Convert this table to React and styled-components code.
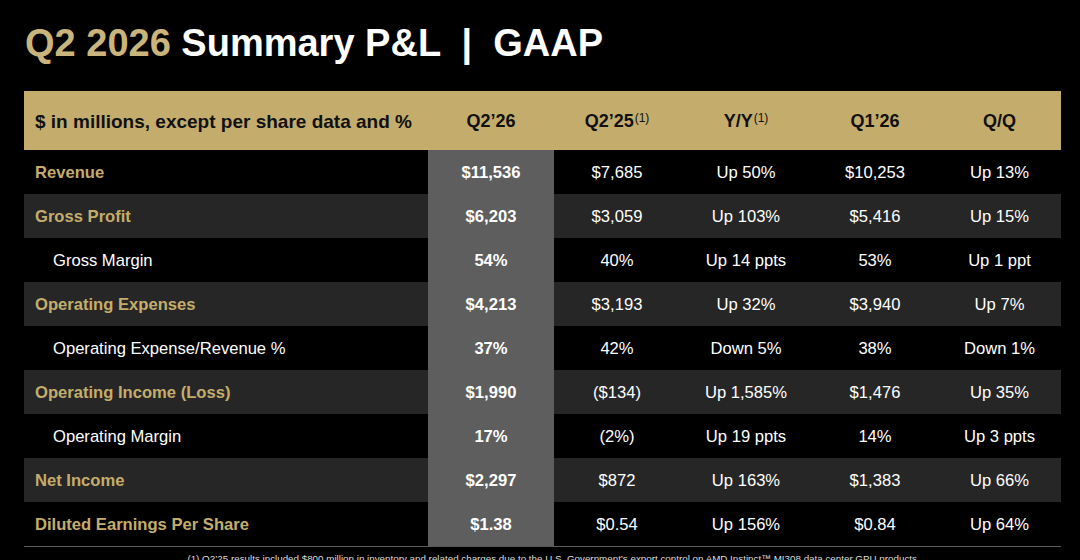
import React from 'react';
import styled, { createGlobalStyle } from 'styled-components';

const GOLD = '#c4ad6c';

const Global = createGlobalStyle`
  html, body { margin: 0; padding: 0; background: #000; }
  body { font-family: "Liberation Sans", Arial, sans-serif; }
`;

const Slide = styled.div`
  width: 1080px;
  height: 560px;
  overflow: hidden;
  background: #000;
  padding: 21px 19px 0 24px;
  box-sizing: border-box;
`;

const Title = styled.h1`
  margin: 0 0 0 1px;
  height: 70px;
  font-size: 38px;
  line-height: 44px;
  font-weight: 700;
  color: #fff;
  white-space: pre;
`;

const Gold = styled.span`
  color: #c9b57c;
`;

const Table = styled.div`
  display: grid;
  grid-template-columns: 404px 126px 126px 132px 126px 123px;
  border-bottom: 1px solid #5a5a5a;
`;

const HeadCell = styled.div`
  height: 59px;
  background: ${GOLD};
  color: #111;
  font-size: ${(p) => (p.$left ? '19px' : '18px')};
  font-weight: 700;
  display: flex;
  align-items: center;
  justify-content: ${(p) => (p.$left ? 'flex-start' : 'center')};
  padding-left: ${(p) => (p.$left ? '11px' : '0')};
  padding-top: 2px;
  box-sizing: border-box;
`;

const Sup = styled.span`
  font-size: 12px;
  font-weight: 400;
  line-height: 1;
  align-self: flex-start;
  margin-top: 19px;
  margin-left: 1px;
`;

const Cell = styled.div`
  height: 44px;
  display: flex;
  align-items: center;
  justify-content: ${(p) => (p.$label ? 'flex-start' : 'center')};
  padding-left: ${(p) => (p.$label ? (p.$sub ? '29px' : '11px') : '0')};
  padding-top: 1px;
  box-sizing: border-box;
  font-size: 16.6px;
  font-weight: ${(p) => (p.$bold ? 700 : 400)};
  color: ${(p) => (p.$label && !p.$sub ? GOLD : '#fff')};
  background: ${(p) => (p.$focus ? '#5e5e5e' : p.$shade ? '#262626' : '#000')};
  white-space: nowrap;
`;

const Footnote = styled.p`
  margin: 6px 0 0;
  padding-left: 22px;
  text-align: center;
  font-size: 9.8px;
  color: #ddd;
  white-space: nowrap;
`;

const rows = [
  { label: 'Revenue', vals: ['$11,536', '$7,685', 'Up 50%', '$10,253', 'Up 13%'] },
  { label: 'Gross Profit', vals: ['$6,203', '$3,059', 'Up 103%', '$5,416', 'Up 15%'] },
  { label: 'Gross Margin', sub: true, vals: ['54%', '40%', 'Up 14 ppts', '53%', 'Up 1 ppt'] },
  { label: 'Operating Expenses', vals: ['$4,213', '$3,193', 'Up 32%', '$3,940', 'Up 7%'] },
  { label: 'Operating Expense/Revenue %', sub: true, vals: ['37%', '42%', 'Down 5%', '38%', 'Down 1%'] },
  { label: 'Operating Income (Loss)', vals: ['$1,990', '($134)', 'Up 1,585%', '$1,476', 'Up 35%'] },
  { label: 'Operating Margin', sub: true, vals: ['17%', '(2%)', 'Up 19 ppts', '14%', 'Up 3 ppts'] },
  { label: 'Net Income', vals: ['$2,297', '$872', 'Up 163%', '$1,383', 'Up 66%'] },
  { label: 'Diluted Earnings Per Share', vals: ['$1.38', '$0.54', 'Up 156%', '$0.84', 'Up 64%'] },
];

export default function App() {
  return (
    <Slide>
      <Global />
      <Title>
        <Gold>Q2 2026</Gold> Summary P&amp;L  |  GAAP
      </Title>
      <Table>
        <HeadCell $left>$ in millions, except per share data and %</HeadCell>
        <HeadCell>Q2’26</HeadCell>
        <HeadCell>
          Q2’25<Sup>(1)</Sup>
        </HeadCell>
        <HeadCell>
          Y/Y<Sup>(1)</Sup>
        </HeadCell>
        <HeadCell>Q1’26</HeadCell>
        <HeadCell>Q/Q</HeadCell>
        {rows.map((r, i) => {
          const shade = i % 2 === 1;
          return (
            <React.Fragment key={r.label}>
              <Cell $label $sub={r.sub} $bold={!r.sub} $shade={shade}>
                {r.label}
              </Cell>
              {r.vals.map((v, j) => (
                <Cell key={j} $bold={j === 0} $focus={j === 0} $shade={shade}>
                  {v}
                </Cell>
              ))}
            </React.Fragment>
          );
        })}
      </Table>
      <Footnote>
        (1) Q2’25 results included $800 million in inventory and related charges due to the U.S. Government’s export control on AMD Instinct™ MI308 data center GPU products.
      </Footnote>
    </Slide>
  );
}
